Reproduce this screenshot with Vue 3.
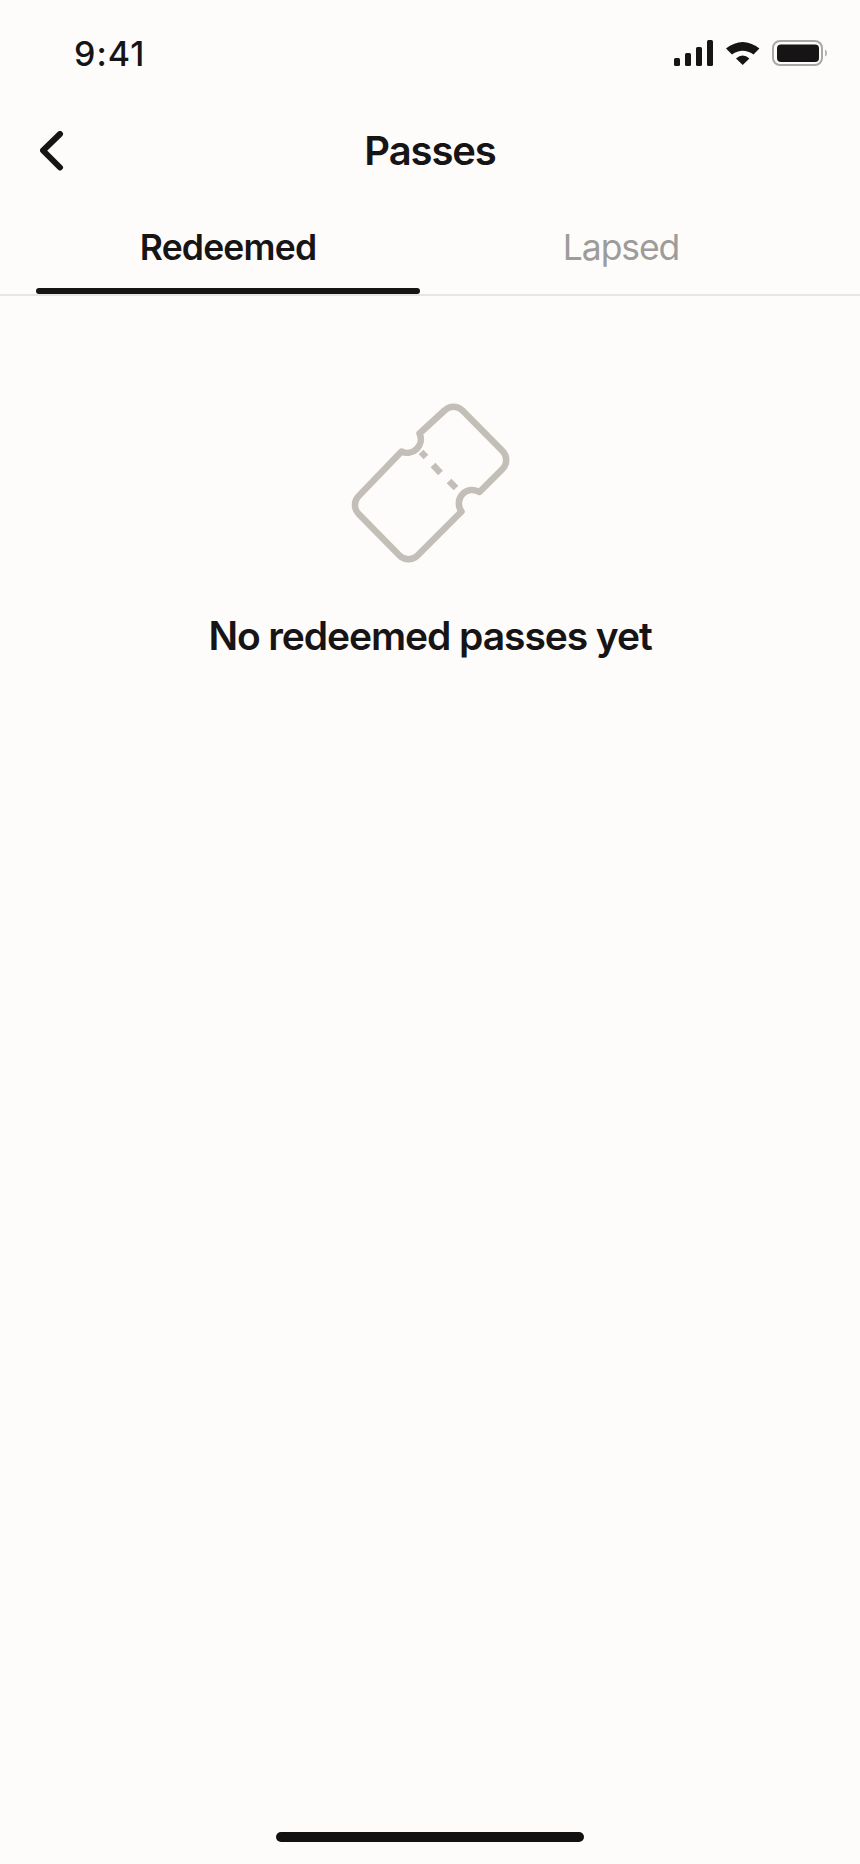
<template>
  <div class="screen">
    <div class="status-bar">
      <span class="time">9:41</span>
      <div class="status-icons">
        <svg class="signal" width="39" height="26" viewBox="0 0 39 26">
          <rect x="0" y="18" width="6" height="8" rx="1.5" />
          <rect x="11" y="13" width="6" height="13" rx="1.5" />
          <rect x="22" y="7" width="6" height="19" rx="1.5" />
          <rect x="33" y="0" width="6" height="26" rx="1.5" />
        </svg>
        <svg class="wifi" width="34" height="23" viewBox="0 0 34 23">
          <path d="M0 6.500Q16.700 -6.500 33.400 6.500L27.500 12.500Q16.700 5 6 12.500Z" />
          <path d="M10 16.500Q16.700 10.500 23.400 16.500L16.700 23Z" />
        </svg>
        <svg class="battery" width="55" height="26" viewBox="0 0 55 26">
          <rect x="1" y="1" width="49" height="24" rx="7" fill="none" stroke="#a9a8a7" stroke-width="2" />
          <rect x="5" y="4.500" width="42" height="17.500" rx="4" fill="#161415" />
          <path d="M53 9.500C54.500 10 55 11.500 55 13C55 14.500 54.500 16 53 16.500Z" fill="#b5b4b3" />
        </svg>
      </div>
    </div>

    <header class="nav">
      <svg class="back" width="24" height="40" viewBox="0 0 24 40" fill="none">
        <path d="M20 3 L3 19.500 L20 36.500" stroke="#161415" stroke-width="6" stroke-linecap="round" stroke-linejoin="round" />
      </svg>
      <h1 class="title">Passes</h1>
    </header>

    <div class="tabs">
      <div class="tab active">Redeemed</div>
      <div class="tab lapsed">Lapsed</div>
    </div>

    <main class="empty">
      <svg class="ticket" width="200" height="180" viewBox="0 0 200 180" fill="none" stroke="#c3beb8" stroke-width="6.500">
        <path d="M89.500 43.500L114.500 20.500A12.700 12.700 0 0 1 132.500 20.500L172.500 61A12.700 12.700 0 0 1 172.500 79L149.500 102A13.500 13.500 0 0 0 131.500 121.500L87.500 165.500A12.700 12.700 0 0 1 69.500 165.500L28.700 124A12.700 12.700 0 0 1 28.700 106L71.500 61.500A13.500 13.500 0 0 0 89.500 43.500Z" stroke-linejoin="round" />
        <path d="M91 62L96 67M103 75L110.500 83M119 91L126 98" />
      </svg>
      <p class="empty-text">No redeemed passes yet</p>
    </main>

    <div class="home-bar"></div>
  </div>
</template>

<script setup>
</script>

<style scoped>
.screen {
  width: 860px;
  height: 1864px;
  background: #fdfcfb;
  color: #161415;
  font-family: Inter, "Noto Sans", sans-serif;
  display: flex;
  flex-direction: column;
}
.status-bar {
  height: 106px;
  padding: 34px 33px 0 74px;
  box-sizing: border-box;
  display: flex;
  justify-content: space-between;
  align-items: flex-start;
}
.time {
  font-size: 34px;
  font-weight: 500;
  line-height: 40px;
  letter-spacing: 1px;
}
.status-icons {
  display: flex;
  align-items: flex-start;
  gap: 13px;
  padding-top: 6px;
}
.signal { fill: #161415; }
.wifi { fill: #161415; margin-top: 2px; }
.battery { margin-left: -1px; }
.nav {
  height: 88px;
  position: relative;
  display: flex;
  align-items: center;
  justify-content: center;
}
.back {
  position: absolute;
  left: 40px;
  top: 25px;
}
.title {
  margin: 0;
  font-size: 40px;
  font-weight: 600;
  letter-spacing: -1.1px;
}
.tabs {
  height: 102px;
  padding: 0 38px 0 36px;
  display: grid;
  grid-template-columns: 384px 1fr;
  border-bottom: 2px solid #e8e6e4;
  box-sizing: border-box;
}
.tab {
  text-align: center;
  font-size: 35.500px;
  letter-spacing: -0.8px;
  line-height: 42px;
  padding-top: 33px;
  color: #9d9c9a;
  position: relative;
}
.tab.lapsed {
  letter-spacing: -1.1px;
}
.tab.active {
  color: #161415;
  font-weight: 600;
}
.tab.active::after {
  content: "";
  position: absolute;
  left: 0;
  right: 0;
  bottom: 0;
  height: 6px;
  border-radius: 3px;
  background: #161415;
}
.empty {
  flex: 1;
  display: flex;
  flex-direction: column;
  align-items: center;
  padding-top: 94px;
}
.ticket {
  display: block;
}
.empty-text {
  margin: 42px 0 0;
  font-size: 39px;
  font-weight: 600;
  letter-spacing: -1.08px;
  line-height: 48px;
}
.home-bar {
  width: 308px;
  height: 10px;
  border-radius: 5px;
  background: #111;
  margin: 0 auto 22px;
}
</style>
